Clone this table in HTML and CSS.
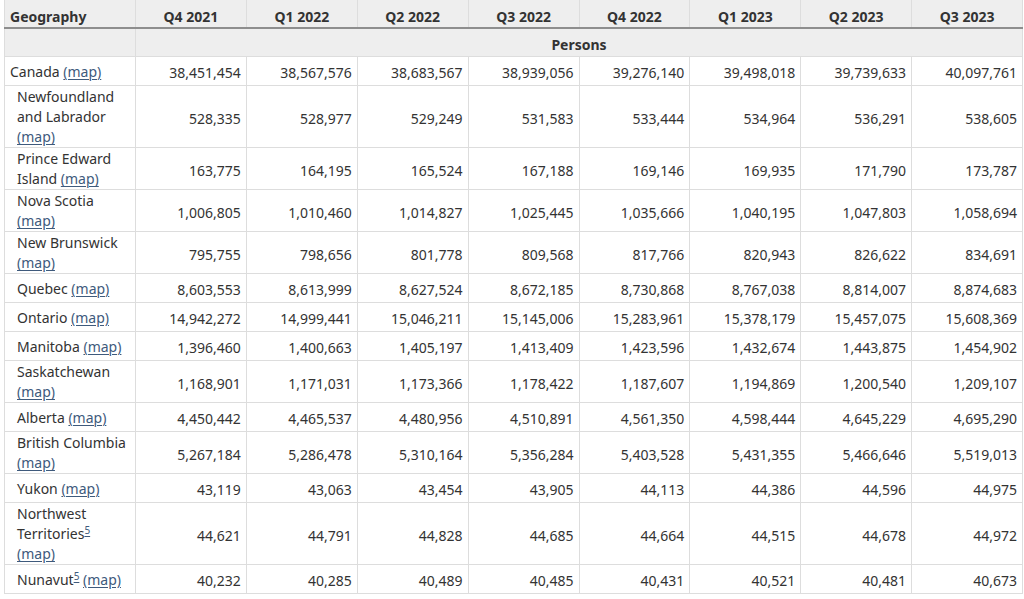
FILE: index.html
```html
<!DOCTYPE html>
<html lang="en">
<head>
<meta charset="utf-8">
<title>Population estimates, quarterly</title>
<link rel="stylesheet" href="styles.css">
</head>
<body>
<table class="data">
  <colgroup>
    <col class="c-geo">
    <col span="8" class="c-num">
  </colgroup>
  <thead>
    <tr class="head">
      <th class="geo-h">Geography</th>
      <th>Q4 2021</th>
      <th>Q1 2022</th>
      <th>Q2 2022</th>
      <th>Q3 2022</th>
      <th>Q4 2022</th>
      <th>Q1 2023</th>
      <th>Q2 2023</th>
      <th>Q3 2023</th>
    </tr>
  </thead>
  <tbody>
    <tr class="unit">
      <td></td>
      <td colspan="8">Persons</td>
    </tr>
    <tr>
      <th class="geo top">Canada <a href="#">(map)</a></th>
      <td>38,451,454</td><td>38,567,576</td><td>38,683,567</td><td>38,939,056</td><td>39,276,140</td><td>39,498,018</td><td>39,739,633</td><td>40,097,761</td>
    </tr>
    <tr>
      <th class="geo">Newfoundland and Labrador <a href="#">(map)</a></th>
      <td>528,335</td><td>528,977</td><td>529,249</td><td>531,583</td><td>533,444</td><td>534,964</td><td>536,291</td><td>538,605</td>
    </tr>
    <tr>
      <th class="geo">Prince Edward Island <a href="#">(map)</a></th>
      <td>163,775</td><td>164,195</td><td>165,524</td><td>167,188</td><td>169,146</td><td>169,935</td><td>171,790</td><td>173,787</td>
    </tr>
    <tr>
      <th class="geo">Nova Scotia <a href="#">(map)</a></th>
      <td>1,006,805</td><td>1,010,460</td><td>1,014,827</td><td>1,025,445</td><td>1,035,666</td><td>1,040,195</td><td>1,047,803</td><td>1,058,694</td>
    </tr>
    <tr>
      <th class="geo">New Brunswick <a href="#">(map)</a></th>
      <td>795,755</td><td>798,656</td><td>801,778</td><td>809,568</td><td>817,766</td><td>820,943</td><td>826,622</td><td>834,691</td>
    </tr>
    <tr>
      <th class="geo">Quebec <a href="#">(map)</a></th>
      <td>8,603,553</td><td>8,613,999</td><td>8,627,524</td><td>8,672,185</td><td>8,730,868</td><td>8,767,038</td><td>8,814,007</td><td>8,874,683</td>
    </tr>
    <tr>
      <th class="geo">Ontario <a href="#">(map)</a></th>
      <td>14,942,272</td><td>14,999,441</td><td>15,046,211</td><td>15,145,006</td><td>15,283,961</td><td>15,378,179</td><td>15,457,075</td><td>15,608,369</td>
    </tr>
    <tr>
      <th class="geo">Manitoba <a href="#">(map)</a></th>
      <td>1,396,460</td><td>1,400,663</td><td>1,405,197</td><td>1,413,409</td><td>1,423,596</td><td>1,432,674</td><td>1,443,875</td><td>1,454,902</td>
    </tr>
    <tr>
      <th class="geo">Saskatchewan <a href="#">(map)</a></th>
      <td>1,168,901</td><td>1,171,031</td><td>1,173,366</td><td>1,178,422</td><td>1,187,607</td><td>1,194,869</td><td>1,200,540</td><td>1,209,107</td>
    </tr>
    <tr>
      <th class="geo">Alberta <a href="#">(map)</a></th>
      <td>4,450,442</td><td>4,465,537</td><td>4,480,956</td><td>4,510,891</td><td>4,561,350</td><td>4,598,444</td><td>4,645,229</td><td>4,695,290</td>
    </tr>
    <tr>
      <th class="geo">British Columbia <a href="#">(map)</a></th>
      <td>5,267,184</td><td>5,286,478</td><td>5,310,164</td><td>5,356,284</td><td>5,403,528</td><td>5,431,355</td><td>5,466,646</td><td>5,519,013</td>
    </tr>
    <tr>
      <th class="geo">Yukon <a href="#">(map)</a></th>
      <td>43,119</td><td>43,063</td><td>43,454</td><td>43,905</td><td>44,113</td><td>44,386</td><td>44,596</td><td>44,975</td>
    </tr>
    <tr>
      <th class="geo">Northwest Territories<sup><a href="#">5</a></sup> <a href="#">(map)</a></th>
      <td>44,621</td><td>44,791</td><td>44,828</td><td>44,685</td><td>44,664</td><td>44,515</td><td>44,678</td><td>44,972</td>
    </tr>
    <tr>
      <th class="geo">Nunavut<sup><a href="#">5</a></sup> <a href="#">(map)</a></th>
      <td>40,232</td><td>40,285</td><td>40,489</td><td>40,485</td><td>40,431</td><td>40,521</td><td>40,481</td><td>40,673</td>
    </tr>
  </tbody>
</table>
</body>
</html>
```

FILE: styles.css
```css
html, body {
  margin: 0;
  padding: 0;
  background: #ffffff;
}

body {
  font-family: "Noto Sans", "Open Sans", sans-serif;
  font-size: 14px;
  line-height: 20px;
  color: #333333;
}

.data {
  margin-left: 4px;
  width: 1019px;
  table-layout: fixed;
  border-collapse: collapse;
}

.c-geo {
  width: 131px;
}

.data th,
.data td {
  border: 1px solid #dddddd;
  padding: 6px 5px 2px;
  vertical-align: middle;
  text-align: right;
  font-weight: normal;
}

.head th {
  background: #eeeeee;
  font-weight: bold;
  text-align: center;
  border-top: 0;
  border-bottom: 2px solid #8e8e8e;
  padding: 7px 5px 0;
}

.head th.geo-h {
  text-align: left;
  padding-left: 5px;
}

.unit td {
  background: #eeeeee;
  font-weight: bold;
  text-align: center;
  padding: 6px 5px 1px;
  height: 20px;
}

.data th.geo {
  text-align: left;
  padding: 1px 4px 0 12px;
}

.data th.geo.top {
  padding-left: 5px;
}

.data a {
  color: #3e5a7c;
  text-decoration: underline;
  text-decoration-thickness: 1px;
  text-underline-offset: 2px;
}

.data sup {
  font-size: 10px;
  line-height: 0;
  vertical-align: 5px;
}
```
